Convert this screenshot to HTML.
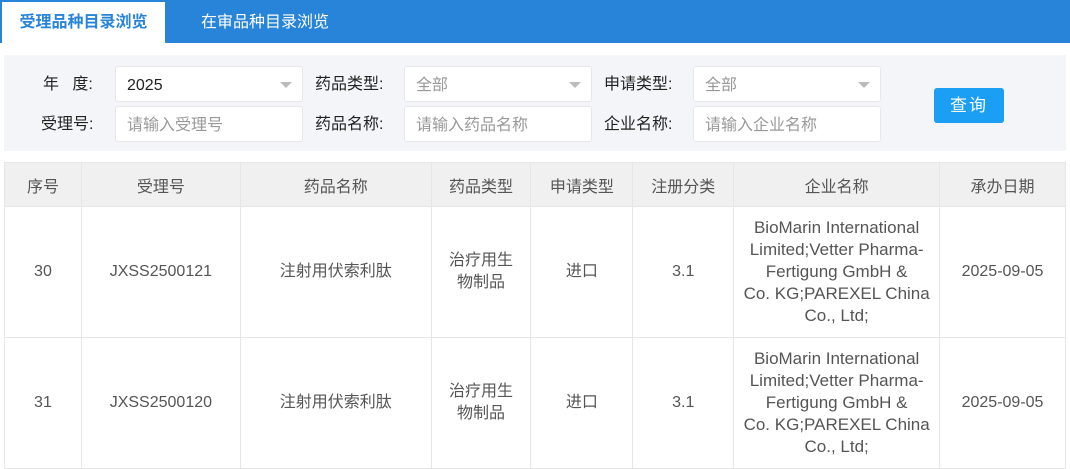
<!DOCTYPE html>
<html><head><meta charset="utf-8"><style>
*{box-sizing:border-box;margin:0;padding:0}
body{width:1070px;height:467px;overflow:hidden;background:#fff;font-family:"Liberation Sans","Noto Sans CJK SC",sans-serif;position:relative}
.bar{position:absolute;left:0;top:0;width:1070px;height:43px;background:#2784d8}
.tab{position:absolute;top:2px;height:41px;font-size:16px;line-height:41px;text-align:center}
.t1{left:2px;width:163px;background:#fff;color:#2784d8;font-weight:bold}
.t2{left:165px;width:200px;color:#fff}
.panel{position:absolute;left:4px;top:55px;width:1062px;height:96px;background:#f4f5f8}
.lbl{position:absolute;font-size:16px;color:#222;line-height:38px}
.inp{position:absolute;width:188px;height:36px;background:#fff;border:1px solid #e8e8ec;border-radius:3px;font-size:16px;line-height:38px;padding-left:11px;color:#999}
.arr{position:absolute;right:10px;top:15px;width:0;height:0;border-left:6px solid transparent;border-right:6px solid transparent;border-top:6px solid #bbb}
.btn{position:absolute;left:934px;top:88px;width:70px;height:35px;background:#1a9ff5;border-radius:3px;color:#fff;font-size:17px;line-height:35px;text-align:center;letter-spacing:2px}
table{position:absolute;left:4px;top:162px;width:1062px;border-collapse:collapse;font-size:16px;color:#555}
td,th{border:1px solid #e6e6e6;text-align:center;font-weight:normal;vertical-align:middle}
th{background:#f0f0f0;height:44px;color:#555}
td{height:131px;line-height:22px}
td.co{font-size:17px}
</style></head><body>
<div class="bar"></div>
<div class="tab t1">受理品种目录浏览</div>
<div class="tab t2">在审品种目录浏览</div>
<div class="panel"></div>
<div class="lbl" style="left:43px;top:66px">年&nbsp;&nbsp;&nbsp;度:</div>
<div class="lbl" style="left:41px;top:106px">受理号:</div>
<div class="lbl" style="left:315px;top:66px">药品类型:</div>
<div class="lbl" style="left:315px;top:106px">药品名称:</div>
<div class="lbl" style="left:604px;top:66px">申请类型:</div>
<div class="lbl" style="left:604px;top:106px">企业名称:</div>
<div class="inp" style="left:115px;top:66px;color:#222">2025<span class="arr"></span></div>
<div class="inp" style="left:115px;top:106px">请输入受理号</div>
<div class="inp" style="left:404px;top:66px">全部<span class="arr"></span></div>
<div class="inp" style="left:404px;top:106px">请输入药品名称</div>
<div class="inp" style="left:693px;top:66px">全部<span class="arr"></span></div>
<div class="inp" style="left:693px;top:106px">请输入企业名称</div>
<div class="btn">查询</div>
<table>
<colgroup><col style="width:77px"><col style="width:159px"><col style="width:191px"><col style="width:100px"><col style="width:102px"><col style="width:101px"><col style="width:206px"><col style="width:126px"></colgroup>
<tr><th>序号</th><th>受理号</th><th>药品名称</th><th>药品类型</th><th>申请类型</th><th>注册分类</th><th>企业名称</th><th>承办日期</th></tr>
<tr><td>30</td><td>JXSS2500121</td><td>注射用伏索利肽</td><td>治疗用生<br>物制品</td><td>进口</td><td>3.1</td><td class="co">BioMarin International<br>Limited;Vetter Pharma-<br>Fertigung GmbH &amp;<br>Co. KG;PAREXEL China<br>Co., Ltd;</td><td>2025-09-05</td></tr>
<tr><td>31</td><td>JXSS2500120</td><td>注射用伏索利肽</td><td>治疗用生<br>物制品</td><td>进口</td><td>3.1</td><td class="co">BioMarin International<br>Limited;Vetter Pharma-<br>Fertigung GmbH &amp;<br>Co. KG;PAREXEL China<br>Co., Ltd;</td><td>2025-09-05</td></tr>
</table>
</body></html>
